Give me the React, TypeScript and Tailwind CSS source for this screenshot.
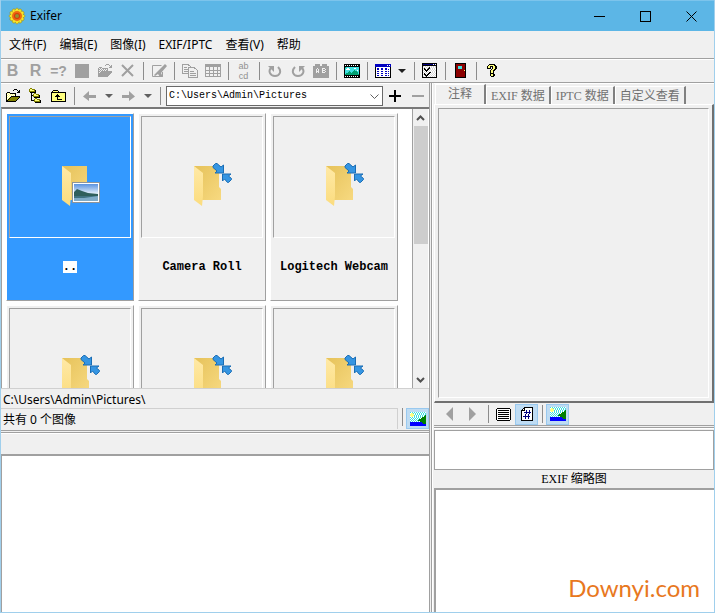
import { useState } from "react";
import type { ReactNode } from "react";

type Palette = Record<string, string>;

const PALETTE: Palette = {
  k: "#000000",
  g: "#a0a0a0",
  y: "#ffff80",
  o: "#808000",
  w: "#ffffff",
  b: "#0000c0",
  n: "#000080",
  c: "#40e0e0",
  t: "#00a070",
  r: "#8b0000",
  G: "#008000",
  B: "#0000ff",
  s: "#d8d8d8",
};

function PixelArt({ rows }: { rows: string[] }) {
  const width = Math.max(...rows.map((row) => row.length));
  return (
    <svg
      width={width}
      height={rows.length}
      viewBox={`0 0 ${width} ${rows.length}`}
      shapeRendering="crispEdges"
      aria-hidden="true"
      className="shrink-0"
    >
      {rows.flatMap((row, y) =>
        row.split("").map((ch, x) =>
          PALETTE[ch] ? (
            <rect key={`${x}-${y}`} x={x} y={y} width={1} height={1} fill={PALETTE[ch]} />
          ) : null
        )
      )}
    </svg>
  );
}

function Icon({ children, w = 16, h = 16, smooth = false }: { children: ReactNode; w?: number; h?: number; smooth?: boolean }) {
  return (
    <svg
      width={w}
      height={h}
      viewBox={`0 0 ${w} ${h}`}
      fill="none"
      shapeRendering={smooth ? "auto" : "crispEdges"}
      aria-hidden="true"
      className="shrink-0"
    >
      {children}
    </svg>
  );
}

const OPEN_FOLDER = [
  ".........kkk....",
  "........k...k.k.",
  ".............kk.",
  "..kkk.......kkk.",
  ".kywykkkkkk.....",
  ".kwywywywyk.....",
  ".kywywywywk.....",
  ".kwyw.kkkkkkkkk.",
  ".kywykooooooook.",
  ".kwykooooooook..",
  ".kykooooooook...",
  ".kkooooooook....",
  ".kkkkkkkkkk.....",
];

const OPEN_FOLDER_OFF = [
  ".........ggg....",
  "........g...g.g.",
  ".............gg.",
  "..ggg.......ggg.",
  ".g.g.gggggg.....",
  ".gg.g.g.g.g.....",
  ".g.g.g.g.gg.....",
  ".gg.ggggggggggg.",
  ".g.gggggggggggg.",
  ".ggggggggggggg..",
  ".gggggggggggg...",
  ".ggggggggggg....",
  ".gggggggggg.....",
];

const TREE = [
  ".oo..........",
  "oyyooo.......",
  "oyyyyok......",
  "ooooook......",
  ".kkkkkk......",
  "..k..oo......",
  "..k.oyyooo...",
  "..kkoyyyyok..",
  "..k.ooooook..",
  "..k..kkkkkk..",
  "..k...oo.....",
  "..k..oyyooo..",
  "..kkkoyyyyok.",
  ".....ooooook.",
  "......kkkkkk.",
];

const UP_FOLDER = [
  "..kkkkk........",
  ".kyyyyyk.......",
  "kkkkkkkkkkkkkkk",
  "kyyyyyyyyyyyyyk",
  "kyyyyykyyyyyyyk",
  "kyyyykkkyyyyyyk",
  "kyyykkkkkyyyyyk",
  "kyyyyykyyyyyyyk",
  "kyyyyykyyyyyyyk",
  "kyyyyykkkkkyyyk",
  "kyyyyyyyyyyyyyk",
  "kkkkkkkkkkkkkkk",
];

const FILM = [
  "kkkkkkkkkkkkkkkk",
  "kwkwkwkwkwkwkwkk",
  "kkkkkkkkkkkkkkkk",
  "ktccccccccccccck",
  "kccwwcccccwwccck",
  "kcwwwwccccccccck",
  "kccccccccctccwck",
  "kcccctcccttttcck",
  "kccctttcttttttck",
  "kcttttttttttttck",
  "kttttttttttttttk",
  "kkkkkkkkkkkkkkkk",
  "kwkwkwkwkwkwkwkk",
  "kkkkkkkkkkkkkkkk",
];

const DETAILS = [
  "bbbbbbbbbbbbbbbb",
  "bbbbbbbbbbbbwbwb",
  "bbbbbbbbbbbbbbbb",
  "kwwwwwwwwwwwwwwk",
  "kwbbwwbbwwbbwwwk",
  "kwbbwwbbwwbbwbwk",
  "kwwwwwwwwwwwwwwk",
  "kwbbwwbbwwbbwbwk",
  "kwwwwwwwwwwwwwwk",
  "kwbbwwbbwwbbwbwk",
  "kwwwwwwwwwwwwwwk",
  "kwbbwwbbwwbbwbwk",
  "kwwwwwwwwwwwwwwk",
  "kkkkkkkkkkkkkkkk",
];

const OPTIONS = [
  "kkkkkkkkkkkkkkk",
  "knnnnnnnnnnwnwk",
  "kkkkkkkkkkkkkkk",
  "kswswswswswswsk",
  "kwswswskwswswsk",
  "kskswskkswswswk",
  "kwkkwkkwswswswk",
  "kswkkkwswswswsk",
  "kwswkwswswswswk",
  "kswswswkkwswswk",
  "kwkwswkkwswswsk",
  "kskkwkkwswswswk",
  "kwskkkwswswswsk",
  "kswskwswswswswk",
  "kkkkkkkkkkkkkkk",
];

const DOOR = [
  "kkkkkkkkkkk",
  "krrrrrrrrrk",
  "krrrrrrrrrk",
  "krrccccrrrk",
  "krrccccrrrk",
  "krrccccrrrk",
  "krrrrrrrrrk",
  "krrrrrrrryk",
  "krrrrrrrrrk",
  "krrrrrrrrrk",
  "krrrrrrrrrk",
  "krrrrrrrrrk",
  "krrrrrrrrrk",
  "krrrrrrrrrk",
  "kkkkkkkkkkk",
];

const HELP = [
  "..kkkkkk..",
  ".kyyyyykk.",
  "kyykkkyykk",
  "kyyk.kyykk",
  "kkkk.kyykk",
  "....kyykk.",
  "...kyykk..",
  "...kyyk...",
  "...kyyk...",
  "...kkkk...",
  "...kyykk..",
  "...kyykk..",
  "....kkk...",
];

const SCENE = [
  "cwcwcwcwcwcwcwcw",
  "wyycwcwcwcwcwcwc",
  "yyyywcwcwcwcwcwc",
  "yyyycwcwcwcwcwcG",
  "wyywcwcwcwcwcwGG",
  "cwcwcwcwcwcwGGGG",
  "wcwcwcwcwcwGGGGG",
  "cwcwcwcwcGGGGGGG",
  "wcwcwcwcGGGGGGGG",
  "cwcwcwcwcwGGGGGG",
  "BBBBBBBBBBBBGGGG",
  "BBBBBBBBBBBBBGGG",
  "BBBBBBBBBBBBBBBB",
  "BBBBBBBBBBBBBBBB",
];

const LIST = [
  ".kkkkkkkkkkkkk.",
  "kwwwwwwwwwwwwwk",
  "kwkkkkkkkkkkkwk",
  "kwwwwwwwwwwwwwk",
  "kwkkkkkkkkkkkwk",
  "kwwwwwwwwwwwwwk",
  "kwkkkkkkkkkkkwk",
  "kwwwwwwwwwwwwwk",
  "kwkkkkkkkkkkkwk",
  "kwwwwwwwwwwwwwk",
  "kwkkkkkkkkkkkwk",
  "kwwwwwwwwwwwwwk",
  ".kkkkkkkkkkkkk.",
];

const HASH = [
  "...kkkkkkkkk",
  "..kkwwwwwwwk",
  ".kwkwwwwwwwk",
  "kkkkwnwwnwwk",
  "kwwwwnwwnwwk",
  "kwwnnnnnnnwk",
  "kwwwwnwwnwwk",
  "kwwwnwwnwwwk",
  "kwwwnwwnwwwk",
  "kwnnnnnnnwwk",
  "kwwwnwwnwwwk",
  "kwwwnwwnwwwk",
  "kwwwwwwwwwwk",
  "kkkkkkkkkkkk",
];

function Sunflower() {
  return (
    <Icon w={18} h={18} smooth>
      {[0, 30, 60, 90, 120, 150].map((a) => (
        <ellipse key={a} cx="9" cy="9" rx="8" ry="3" fill="#f5ea28" stroke="#8f7d20" strokeWidth=".5" transform={`rotate(${a} 9 9)`} />
      ))}
      <circle cx="9" cy="9" r="6" fill="#f8e02a" />
      <circle cx="9" cy="9" r="5" fill="#ee6a10" />
      <circle cx="9" cy="9" r="3" fill="#d8380c" />
      <circle cx="9" cy="9" r="2" fill="#98902c" />
    </Icon>
  );
}

function ToolButton({ label, children, active = false }: { label: string; children: ReactNode; active?: boolean }) {
  return (
    <button
      type="button"
      aria-label={label}
      className={`flex h-[21px] w-[23px] shrink-0 items-center justify-center ${active ? "border border-[#99c9ef] bg-[#bfdcf3]" : ""}`}
    >
      {children}
    </button>
  );
}

function Separator() {
  return (
    <div className="flex w-2 shrink-0 justify-center">
      <div className="h-[18px] w-px bg-[#8c8c8c]" />
    </div>
  );
}

function Caret({ label, color }: { label: string; color: string }) {
  return (
    <button type="button" aria-label={label} className="flex h-[21px] w-4 shrink-0 items-center justify-center">
      <Icon w={8} h={4} smooth>
        <path d="M0 0H8L4 4Z" fill={color} />
      </Icon>
    </button>
  );
}

function Arrow({ flip = false }: { flip?: boolean }) {
  return (
    <Icon w={13} h={10} smooth>
      <path
        d="M6 0V4H13V7H6V10L0 5.500Z"
        fill="#a0a0a0"
        transform={flip ? "translate(13 0) scale(-1 1)" : undefined}
      />
    </Icon>
  );
}

function Rotate({ flip = false }: { flip?: boolean }) {
  return (
    <Icon w={14} h={14} smooth>
      <g transform={flip ? "translate(14 0) scale(-1 1)" : undefined}>
        <path d="M3 4C0 7 2 12 7 12C12 12 14 7 10 3" stroke="#a0a0a0" strokeWidth="2" />
        <path d="M0 2H6V8Z" fill="#a0a0a0" />
      </g>
    </Icon>
  );
}

function MainToolbar() {
  return (
    <div role="toolbar" aria-label="工具栏" className="flex h-[25px] shrink-0 items-center overflow-hidden border-y border-[#a0a0a0] shadow-[inset_0_1px_0_#ffffff]">
      <ToolButton label="B"><span className="font-['Liberation_Sans',sans-serif] text-[16px] leading-4 font-bold text-[#a0a0a0]">B</span></ToolButton>
      <ToolButton label="R"><span className="font-['Liberation_Sans',sans-serif] text-[16px] leading-4 font-bold text-[#a0a0a0]">R</span></ToolButton>
      <ToolButton label="=?"><span className="font-['Liberation_Sans',sans-serif] text-[14px] leading-4 font-bold text-[#a0a0a0]">=?</span></ToolButton>
      <ToolButton label="停止"><Icon w={14} h={14}><rect width="14" height="14" fill="#a0a0a0" /></Icon></ToolButton>
      <ToolButton label="打开"><PixelArt rows={OPEN_FOLDER_OFF} /></ToolButton>
      <ToolButton label="删除">
        <Icon w={14} h={13} smooth><path d="M1 1L12 12M12 1L1 12" stroke="#a0a0a0" strokeWidth="2" /></Icon>
      </ToolButton>
      <Separator />
      <ToolButton label="编辑注释">
        <Icon w={16} h={14} smooth>
          <path d="M10.500 1.500H1.500V12.500H11.500V8" stroke="#a0a0a0" />
          <path d="M14 0L16 2L10 9L12 13H9L7 10L4 12L3 11L6 8Z" fill="#a0a0a0" />
        </Icon>
      </ToolButton>
      <Separator />
      <ToolButton label="复制">
        <Icon w={16} h={14}>
          <path d="M.5.5H6L9 3V9.500H.5ZM2 3.500H5M2 5.500H6M2 7.500H6" stroke="#a0a0a0" />
          <path d="M6.500 3.500H12L15 6V13.500H6.500Z" fill="#f0f0f0" stroke="#a0a0a0" />
          <path d="M8 7.500H12M8 9.500H14M8 11.500H14" stroke="#a0a0a0" />
        </Icon>
      </ToolButton>
      <ToolButton label="表格">
        <Icon w={16} h={13}>
          <path d="M0 0H16V3H0Z" fill="#a0a0a0" />
          <path d="M.5 3V12.500H15.500V3M0 6.500H16M0 9.500H16M4.500 3V12M8.500 3V12M12.500 3V12" stroke="#a0a0a0" />
        </Icon>
      </ToolButton>
      <Separator />
      <ToolButton label="重命名">
        <span className="flex flex-col items-center font-['Liberation_Sans',sans-serif] text-[9px] leading-[10px] text-[#909090]">
          <span>ab</span>
          <span>cd</span>
        </span>
      </ToolButton>
      <Separator />
      <ToolButton label="向左旋转"><Rotate /></ToolButton>
      <ToolButton label="向右旋转"><Rotate flip /></ToolButton>
      <ToolButton label="自动旋转">
        <Icon w={16} h={14}>
          <path d="M0 14V2H2V0H7V2H9V0H14V2H16V14Z" fill="#a0a0a0" />
          <path d="M3.500 9V5M5.500 5V9M3 7.500H6M4 4.500H5M9.500 4V9M9 4.500H12M9 6.500H12M9 8.500H12M12.500 5V6M12.500 7V8" stroke="#f0f0f0" />
        </Icon>
      </ToolButton>
      <Separator />
      <ToolButton label="幻灯片"><PixelArt rows={FILM} /></ToolButton>
      <Separator />
      <ToolButton label="视图"><PixelArt rows={DETAILS} /></ToolButton>
      <Caret label="视图选项" color="#202020" />
      <Separator />
      <ToolButton label="选项"><PixelArt rows={OPTIONS} /></ToolButton>
      <Separator />
      <ToolButton label="退出"><PixelArt rows={DOOR} /></ToolButton>
      <Separator />
      <ToolButton label="帮助"><PixelArt rows={HELP} /></ToolButton>
    </div>
  );
}

function AddressBar() {
  return (
    <div className="flex h-6 shrink-0 items-center border-t border-white">
      <ToolButton label="打开文件夹"><PixelArt rows={OPEN_FOLDER} /></ToolButton>
      <ToolButton label="目录树"><PixelArt rows={TREE} /></ToolButton>
      <ToolButton label="上一级"><PixelArt rows={UP_FOLDER} /></ToolButton>
      <Separator />
      <ToolButton label="后退"><Arrow /></ToolButton>
      <Caret label="后退历史" color="#606060" />
      <ToolButton label="前进"><Arrow flip /></ToolButton>
      <Caret label="前进历史" color="#606060" />
      <Separator />
      <div className="relative ml-0.5 min-w-0 flex-1">
        <select
          aria-label="路径"
          className="block h-5 w-full appearance-none border border-[#696969] bg-white pl-0.5 font-['Liberation_Mono',monospace] text-[10px] leading-4 text-black"
        >
          <option>C:\Users\Admin\Pictures</option>
        </select>
        <span className="pointer-events-none absolute top-2 right-1">
          <Icon w={9} h={6} smooth><path d="M.5.5L4.500 4.500L8.500.5" stroke="#606060" /></Icon>
        </span>
      </div>
      <ToolButton label="添加"><Icon w={12} h={12}><path d="M5 0H7V5H12V7H7V12H5V7H0V5H5Z" fill="#000" /></Icon></ToolButton>
      <ToolButton label="移除"><Icon w={12} h={2}><path d="M0 0H12V2H0Z" fill="#a0a0a0" /></Icon></ToolButton>
    </div>
  );
}

function FolderIcon({ pictures = false }: { pictures?: boolean }) {
  return (
    <Icon w={64} h={64} smooth>
      <defs>
        <linearGradient id="folderBack" x1="0" y1="0" x2="1" y2="1">
          <stop offset="0" stopColor="#e6c25a" />
          <stop offset="1" stopColor="#f7d980" />
        </linearGradient>
        <linearGradient id="folderFront" x1="0" y1="0" x2="0" y2="1">
          <stop offset="0" stopColor="#ffe9a6" />
          <stop offset="1" stopColor="#fbdc7e" />
        </linearGradient>
        <linearGradient id="sky" x1="0" y1="0" x2="0" y2="1">
          <stop offset="0" stopColor="#5b93e0" />
          <stop offset="1" stopColor="#e8f2fa" />
        </linearGradient>
      </defs>
      <path d="M24 21H49V42L51 44V55H30Z" fill="url(#folderBack)" />
      <path d="M24 21L33 28V51L32 61L24 55Z" fill="url(#folderFront)" />
      {pictures ? (
        <g>
          <rect x="34.5" y="37.5" width="27" height="20" fill="#fff" stroke="#8e9499" />
          <rect x="36" y="39" width="24" height="10" fill="url(#sky)" />
          <path d="M36 47L39 44L44 46L50 48L60 49V51H36Z" fill="#2f5f5c" />
          <rect x="36" y="51" width="24" height="5" fill="#7fabc8" />
          <path d="M36 51H60L46 53H36Z" fill="#3f7280" />
        </g>
      ) : (
        <g>
          <path d="M49 20H54V28H61V30H52V37H51V42L49 40Z" fill="#f0f0f0" />
          <g fill="#3595e2" stroke="#1a6db4" strokeWidth="1">
            <path d="M43 21L45.500 18.500H47L51 22L53.500 20V28H45L47 26L43 22.500Z" />
            <path d="M52.500 29H61L58.500 31L61.500 33.500V34.500L58.500 37.500H57.500L54.500 34L52.500 36Z" />
          </g>
        </g>
      )}
    </Icon>
  );
}

function Thumb({ name, pictures, selected, onSelect }: { name?: string; pictures: boolean; selected: boolean; onSelect: () => void }) {
  return (
    <button
      type="button"
      onClick={onSelect}
      aria-pressed={selected}
      className={`flex h-[188px] w-32 flex-col items-start border border-white border-r-[#a0a0a0] border-b-[#a0a0a0] pt-0.5 pl-0.5 ${selected ? "bg-[#3399ff]" : "bg-[#f0f0f0]"}`}
    >
      <span className="flex h-[122px] w-[122px] items-center justify-center border border-[#a0a0a0] border-r-white border-b-white">
        <FolderIcon pictures={pictures} />
      </span>
      {name && (
        <span className="flex h-[58px] w-[122px] items-center justify-center">
          <span className={`font-['Liberation_Mono',monospace] text-[12px] leading-3 font-bold whitespace-nowrap text-black ${selected ? "bg-white" : ""}`}>
            {name}
          </span>
        </span>
      )}
    </button>
  );
}

const FOLDERS: { name?: string; pictures?: boolean }[] = [
  { name: "..", pictures: true },
  { name: "Camera Roll" },
  { name: "Logitech Webcam" },
  {},
  {},
  {},
];

function FolderBrowser() {
  const [selected, setSelected] = useState(0);
  return (
    <div className="flex min-h-0 flex-1 border-t-2 border-l border-[#787878] border-l-[#a0a0a0] bg-white">
      <div className="flex min-w-0 flex-1 flex-wrap content-start gap-1 overflow-hidden border-r border-[#a0a0a0] py-1 pl-1">
        {FOLDERS.map((folder, i) => (
          <Thumb key={i} name={folder.name} pictures={!!folder.pictures} selected={selected === i} onSelect={() => setSelected(i)} />
        ))}
      </div>
      <div className="flex w-4 shrink-0 flex-col items-center border-r border-white bg-[#f0f0f0]">
        <button type="button" aria-label="向上滚动" className="flex h-[17px] w-full items-center justify-center">
          <Icon w={9} h={6} smooth><path d="M1 5L4.500 1.500L8 5" stroke="#505050" strokeWidth="2" /></Icon>
        </button>
        <div className="h-[118px] w-3.5 bg-[#cdcdcd]" />
        <div className="flex-1" />
        <button type="button" aria-label="向下滚动" className="flex h-[17px] w-full items-center justify-center">
          <Icon w={9} h={6} smooth><path d="M1 1L4.500 4.500L8 1" stroke="#505050" strokeWidth="2" /></Icon>
        </button>
      </div>
    </div>
  );
}

function Splitter() {
  return (
    <div className="flex h-1 shrink-0 flex-col">
      <div className="h-[3px] border-y border-[#a0a0a0]" />
      <div className="h-px bg-white" />
    </div>
  );
}

function LeftSide() {
  return (
    <div className="flex min-w-0 flex-[428_1_0%] flex-col">
      <div className="flex min-h-0 flex-[347_1_0%] flex-col">
        <AddressBar />
        <FolderBrowser />
        <div className="h-5 shrink-0 border-t border-[#d0d0d0] pt-px pl-0.5 text-[12px] leading-5">C:\Users\Admin\Pictures\</div>
        <div className="flex h-[22px] shrink-0 items-start">
          <div className="h-[21px] flex-1 border-t border-r border-[#d0d0d0] pt-px pl-0.5 text-[12px] leading-5">共有 0 个图像</div>
          <Separator />
          <ToolButton label="显示图像" active><PixelArt rows={SCENE} /></ToolButton>
        </div>
      </div>
      <Splitter />
      <div className="flex min-h-0 flex-[178_1_0%] flex-col">
        <div className="h-5 shrink-0" />
        <div className="flex-1 border-t-2 border-l border-[#a0a0a0] bg-white" />
      </div>
    </div>
  );
}

const TABS = [
  { latin: "", cjk: "注释" },
  { latin: "EXIF ", cjk: "数据" },
  { latin: "IPTC ", cjk: "数据" },
  { latin: "", cjk: "自定义查看" },
];

function RightSide() {
  const [tab, setTab] = useState(0);
  return (
    <div className="flex min-w-0 flex-[280_1_0%] flex-col">
      <div className="flex min-h-0 flex-[342_1_0%] flex-col">
        <div role="tablist" className="flex h-[21px] shrink-0 items-end border-t border-white pl-px">
          {TABS.map(({ latin, cjk }, i) => (
            <button
              key={latin + cjk}
              type="button"
              role="tab"
              aria-selected={tab === i}
              onClick={() => setTab(i)}
              className={`flex items-center justify-center border-t border-r-2 border-l border-t-white border-r-[#808080] border-l-white whitespace-pre text-[#707070] ${tab === i ? "h-5 px-3 pb-0.5" : "h-[18px] px-1"}`}
            >
              <span className="font-['Liberation_Serif',serif] text-[12px] leading-4">{latin}</span>
              <span className="text-[12px] leading-4">{cjk}</span>
            </button>
          ))}
        </div>
        <div className="flex flex-1 border border-r-2 border-b-2 border-white border-r-[#707070] border-b-[#707070] p-[3px]">
          <textarea aria-label="注释" className="block w-full resize-none border border-[#a0a0a0] border-r-white border-b-white bg-[#f0f0f0] outline-none" />
        </div>
        <div className="flex h-[22px] shrink-0 items-center pl-1">
          <ToolButton label="上一个"><Icon w={7} h={14} smooth><path d="M7 0V14L0 7Z" fill="#a0a0a0" /></Icon></ToolButton>
          <ToolButton label="下一个"><Icon w={7} h={14} smooth><path d="M0 0V14L7 7Z" fill="#a0a0a0" /></Icon></ToolButton>
          <Separator />
          <ToolButton label="列表"><PixelArt rows={LIST} /></ToolButton>
          <ToolButton label="编号" active><PixelArt rows={HASH} /></ToolButton>
          <Separator />
          <ToolButton label="缩略图" active><PixelArt rows={SCENE} /></ToolButton>
        </div>
      </div>
      <Splitter />
      <div className="flex min-h-0 flex-[183_1_0%] flex-col">
        <div className="mt-px h-10 shrink-0 border border-[#a0a0a0] bg-white" />
        <div className="flex h-[18px] shrink-0 items-center justify-center whitespace-pre text-black">
          <span className="font-['Liberation_Serif',serif] text-[12px] leading-4">EXIF </span>
          <span className="text-[12px] leading-4">缩略图</span>
        </div>
        <div className="relative flex-1 border-t-2 border-l-2 border-[#a0a0a0] bg-white">
          <span className="absolute right-3.5 bottom-2 font-['Lato',sans-serif] text-[24px] leading-8 text-[#e8781e]">Downyi.com</span>
        </div>
      </div>
    </div>
  );
}

const MENUS = ["文件(F)", "编辑(E)", "图像(I)", "EXIF/IPTC", "查看(V)", "帮助"];

export default function App() {
  return (
    <div className="flex h-screen flex-col overflow-hidden border-x border-b border-[#a0cfec] bg-[#f0f0f0] font-['Noto_Sans','Noto_Sans_CJK_SC',sans-serif] text-black">
      <header className="flex h-[31px] shrink-0 items-center border-t border-[#7cc4ec] bg-[#5cb6e6] pl-[7px]">
        <Sunflower />
        <h1 className="ml-1 flex-1 text-[12px] leading-4">Exifer</h1>
        <button type="button" aria-label="最小化" className="flex h-full w-[46px] items-center justify-center">
          <Icon w={11} h={11}><path d="M0 5.500H11" stroke="#000" /></Icon>
        </button>
        <button type="button" aria-label="最大化" className="flex h-full w-[46px] items-center justify-center">
          <Icon w={11} h={11}><path d="M.5.5H10.500V10.500H.5Z" stroke="#000" /></Icon>
        </button>
        <button type="button" aria-label="关闭" className="flex h-full w-[46px] items-center justify-center">
          <Icon w={11} h={11} smooth><path d="M.5.5L10.500 10.500M10.500.5L.5 10.500" stroke="#000" /></Icon>
        </button>
      </header>
      <nav className="flex h-[27px] shrink-0 items-center gap-[13px] pl-2">
        {MENUS.map((item) => (
          <button key={item} type="button" className="text-[12px] leading-4 whitespace-nowrap">{item}</button>
        ))}
      </nav>
      <MainToolbar />
      <main className="flex min-h-0 flex-1">
        <LeftSide />
        <div className="flex w-[5px] shrink-0">
          <div className="w-[3px] border-x border-[#a0a0a0]" />
          <div className="w-px bg-white" />
        </div>
        <RightSide />
      </main>
    </div>
  );
}
